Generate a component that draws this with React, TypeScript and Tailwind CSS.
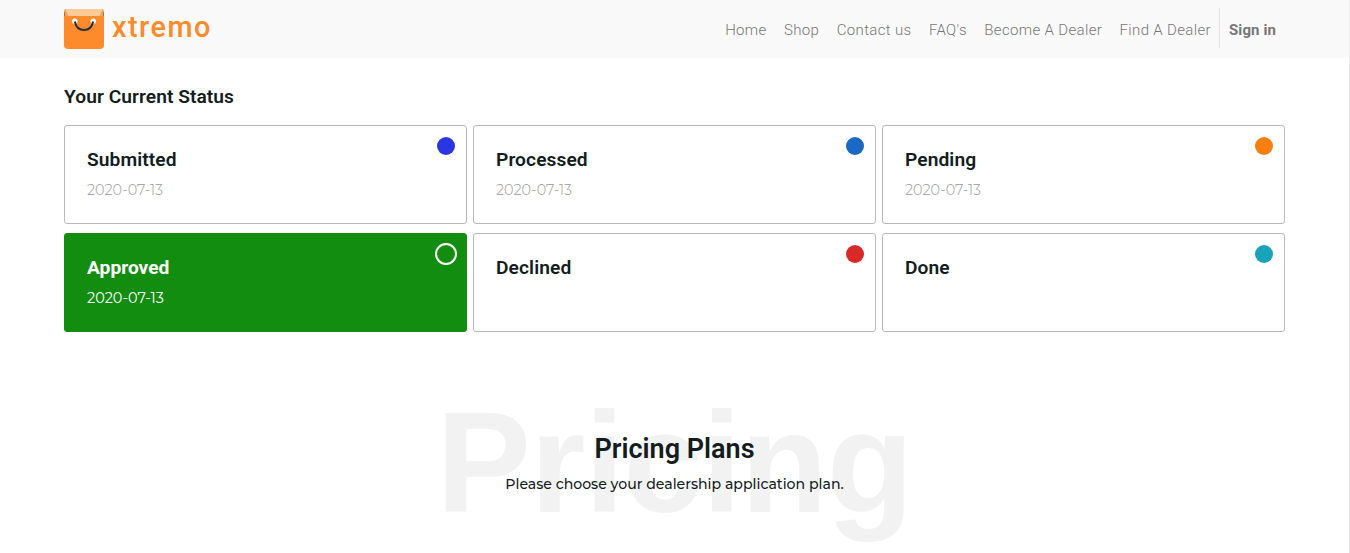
const links = ["Home", "Shop", "Contact us", "FAQ's", "Become A Dealer", "Find A Dealer"];

type Status = { name: string; date?: string; dot: string; active?: boolean };

const statuses: Status[] = [
  { name: "Submitted", date: "2020-07-13", dot: "bg-[#2b35e2]" },
  { name: "Processed", date: "2020-07-13", dot: "bg-[#1c68c5]" },
  { name: "Pending", date: "2020-07-13", dot: "bg-[#f77f12]" },
  { name: "Approved", date: "2020-07-13", dot: "", active: true },
  { name: "Declined", dot: "bg-[#d92a2a]" },
  { name: "Done", dot: "bg-[#19a2b8]" },
];

function Logo() {
  return (
    <div className="flex items-center">
      <svg width="40" height="40" viewBox="0 0 40 40" aria-hidden="true">
        <path d="M1 0H39V9H1Z" fill="#ffc998" />
        <path d="M1 0L4 7H0V4Z" fill="#b86a24" />
        <path d="M39 0L36 7H40V4Z" fill="#b86a24" />
        <path d="M1 0L4.5 7H1Z" fill="#f0a564" />
        <path d="M39 0L35.500 7H39Z" fill="#f0a564" />
        <path d="M0 7H40V36Q40 40 36 40H4Q0 40 0 36Z" fill="#fd8a2b" />
        <circle cx="10.800" cy="12.300" r="2.700" fill="#fff" />
        <circle cx="29.200" cy="12.300" r="2.700" fill="#fff" />
        <path d="M10.800 12.500C12 18 15.500 21 20 21S28 18 29.200 12.500" fill="none" stroke="#232f38" strokeWidth="2" />
      </svg>
      <span className="mb-1 ml-2 text-[28.8px] leading-9 font-medium tracking-[1.5px] text-[#fd8a2b]">xtremo</span>
    </div>
  );
}

function StatusCard({ name, date, dot, active }: Status) {
  return (
    <div
      className={
        active
          ? "flex h-[99px] justify-between rounded-[3px] border border-[#138d10] bg-[#138d10] pl-[22px] text-white"
          : "flex h-[99px] justify-between rounded-[3px] border border-[#b9b9b9] bg-white pl-[22px] text-[#131c1e]"
      }
    >
      <div className="pt-[22px]">
        <h3 className={active ? "text-[19.2px] leading-6 font-bold" : "text-[19.2px] leading-6 font-semibold tracking-[0.08px]"}>{name}</h3>
        {date && (
          <p
            className={
              active
                ? "mt-[6px] font-['Montserrat','Lato',sans-serif] text-[14.4px] leading-6"
                : "mt-[6px] font-['Montserrat','Lato',sans-serif] text-[14.4px] leading-6 font-light text-[#999]"
            }
          >
            {date}
          </p>
        )}
      </div>
      {active ? (
        <span className="mt-[9px] mr-[9px] size-[22px] rounded-full border-2 border-white" />
      ) : (
        <span className={`mt-[11px] mr-[11px] size-[18px] rounded-full ${dot}`} />
      )}
    </div>
  );
}

export default function App() {
  return (
    <div className="h-[553px] overflow-hidden border-r border-[#ececec] bg-white font-['Roboto',sans-serif] text-[#131c1e]">
      <header className="flex h-[58px] items-center justify-between bg-[#f9f9f9] pr-[73px] pl-16">
        <Logo />
        <nav className="-mt-0.5 flex h-10 items-center text-[15px] tracking-[0.35px] text-[#777]">
          {links.map((link) => (
            <a key={link} className="mr-[17.4px] pt-1 nth-[6]:mr-2">
              <span className="font-[350]">{link}</span>
            </a>
          ))}
          <span className="h-10 w-px bg-[#e5e5e5]" />
          <b className="ml-[9px] pt-1 font-bold tracking-[0.1px]">Sign in</b>
        </nav>
      </header>

      <main>
        <section className="px-16 pt-[27px]">
          <h2 className="text-[19.2px] leading-6 font-semibold tracking-[0.05px]">Your Current Status</h2>
          <div className="mt-4 grid grid-cols-[repeat(3,403px)] gap-x-1.5 gap-y-[9px]">
            {statuses.map((status) => (
              <StatusCard key={status.name} {...status} />
            ))}
          </div>
        </section>

        <section className="relative mt-[101px] text-center">
          <div className="absolute inset-x-0 -top-[50px] font-['Liberation_Sans',sans-serif] text-[142px] leading-[160px] font-bold tracking-[-0.7px] text-[#f2f2f2]" aria-hidden="true">
            Pricing
          </div>
          <div className="relative">
            <h2 className="text-[27px] leading-8 font-semibold">Pricing Plans</h2>
            <p className="mt-[7px] font-['Montserrat','Lato',sans-serif] text-[14.08px] leading-6 font-medium">
              Please choose your dealership application plan.
            </p>
          </div>
        </section>
      </main>
    </div>
  );
}
